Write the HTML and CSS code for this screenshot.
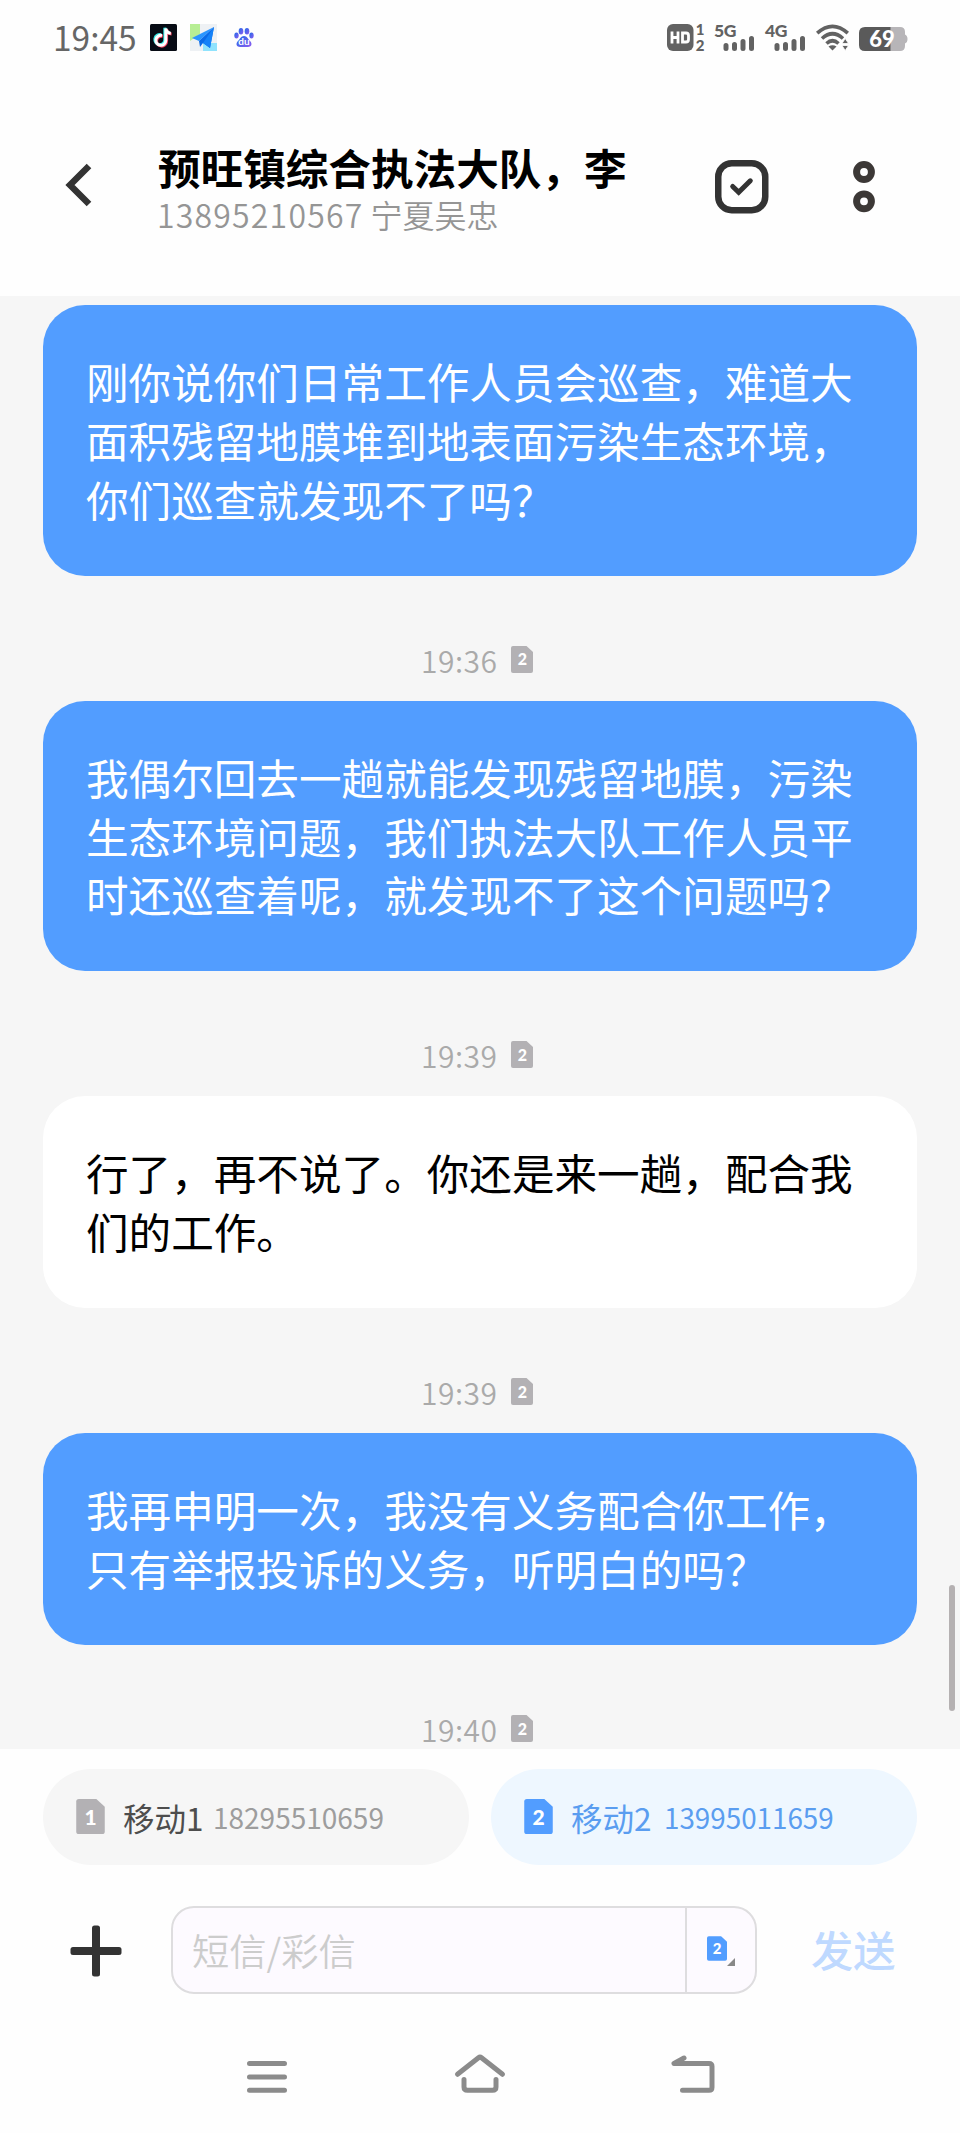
FILE: index.html
```html
<!DOCTYPE html>
<html lang="zh-CN">
<head>
<meta charset="utf-8">
<title>短信</title>
<link rel="stylesheet" href="styles.css">
</head>
<body>
<svg class="defs" width="0" height="0">
  <symbol id="sim" viewBox="0 0 22 27"><path d="M2 0H15.500L22 6V25a2 2 0 0 1-2 2H2a2 2 0 0 1-2-2V2a2 2 0 0 1 2-2Z" fill="currentColor"/></symbol>
  <symbol id="bars" viewBox="0 0 32 15"><path d="M3 9.500V12.500M11.500 8.500V12.500M20 5.500V12.500M28.500 2.500V12.500" stroke="#626262" stroke-width="5" stroke-linecap="round"/></symbol>
</svg>
<div class="phone">
  <div class="status">
    <span class="clock">19:45</span>
    <svg class="app-a" width="27" height="27" viewBox="0 0 27 27"><rect width="27" height="27" rx="1.500" fill="#070b14"/><g fill="none" stroke-width="3"><path d="M12 11.500a5 5 0 1 0 3.800 5V4.500c.5 3 2.500 4.500 5 4.700" stroke="#35e5e2" transform="translate(-1 -.8)"/><path d="M12 11.500a5 5 0 1 0 3.800 5V4.500c.5 3 2.500 4.500 5 4.700" stroke="#f3425e" transform="translate(.8 .8)"/><path d="M12 11.500a5 5 0 1 0 3.800 5V4.500c.5 3 2.500 4.500 5 4.700" stroke="#fff"/></g></svg>
    <svg class="app-b" width="27" height="27" viewBox="0 0 27 27"><rect width="27" height="27" fill="#eef1f4"/><path d="M0 0H10V10L0 17Z" fill="#b7ee94"/><path d="M13 19H27V27H13Z" fill="#90e3fd"/><path d="M24 3 2 14l7 3Z" fill="#2a95ff"/><path d="M24 3 9 17l1 6 3-4 7 5Z" fill="#0a6be8"/><path d="M24 3 13 19l7 5Z" fill="#1482f8"/></svg>
    <svg class="app-c" width="20" height="20" viewBox="0 0 20 20"><defs><linearGradient id="paw" x2="1" y2="1"><stop stop-color="#1e6be8"/><stop offset="1" stop-color="#8d5cf0"/></linearGradient></defs><g fill="url(#paw)"><ellipse cx="2.500" cy="7.500" rx="2.200" ry="3"/><ellipse cx="7" cy="3.200" rx="2.300" ry="3.200"/><ellipse cx="13" cy="3.200" rx="2.300" ry="3.200"/><ellipse cx="17.500" cy="7.500" rx="2.200" ry="3"/><path d="M10 8c3 0 4 3 6 5 3 3 1 6-2 6H6c-3 0-5-3-2-6 2-2 3-5 6-5Z"/></g><text x="10" y="17" class="du">du</text></svg>
    <svg class="hd" width="38" height="27" viewBox="0 0 38 27"><rect width="26.500" height="27" rx="6" fill="#626262"/><path d="M5 7.500V19.500M11 7.500V19.500M5 13.500H11M15.500 9H19Q21.500 9 21.500 11.500V15.500Q21.500 18 19 18H15.500Z" fill="none" stroke="#fff" stroke-width="2.800"/><text x="33" y="10.500" class="tiny">1</text><text x="33" y="26.500" class="tiny">2</text></svg>
    <svg class="net" width="42" height="27" viewBox="0 0 42 27"><text x="0" y="13" class="gen">5G</text><use href="#bars" x="9" y="12" width="32" height="15"/></svg>
    <svg class="net" width="42" height="27" viewBox="0 0 42 27"><text x="0" y="13" class="gen">4G</text><use href="#bars" x="9" y="12" width="32" height="15"/></svg>
    <svg class="wifi" width="33" height="27" viewBox="0 0 33 27"><g fill="none" stroke="#626262" stroke-width="3.600"><path d="M1.200 9.200Q16.500-4.500 31.800 9.200"/><path d="M6 14.500Q16.500 5 27 14.500"/><path d="M10.500 19.500Q16.500 14 22.500 19.500"/></g><path d="M12.500 22.500Q16.500 19.800 20.500 22.500L16.500 26.500Z" fill="#626262"/><path d="M26 19.500 29.200 14.500 32.500 19.500ZM26 21.500H32.500L29.200 26.500Z" fill="#626262" stroke="#fff" stroke-width=".8"/></svg>
    <svg class="battery" width="49" height="24" viewBox="0 0 49 24"><path d="M31 0H41q5 0 5 5v2.500q2.500 1 2.500 4.500T46 16.500V19q0 5-5 5H31Z" fill="#b7b5b8"/><path d="M6 0H31.500V24H6q-6 0-6-6V6q0-6 6-6Z" fill="#5a5a5a"/><text x="23" y="19.500" class="level">69</text></svg>
  </div>

  <header class="header">
    <svg class="back" width="28" height="46" viewBox="0 0 28 46"><path d="M24 4 5 23 24 42" fill="none" stroke="#333" stroke-width="6.500"/></svg>
    <div class="contact">
      <div class="name">预旺镇综合执法大队，李</div>
      <div class="place"><span class="digits">13895210567</span> 宁夏吴忠</div>
    </div>
    <svg class="select" width="54" height="54" viewBox="0 0 54 54"><rect x="3.250" y="3.250" width="47" height="47" rx="13.500" fill="none" stroke="#333" stroke-width="6.500"/><path d="M17.700 26.500 23.700 32.300 35.300 20.800" fill="none" stroke="#333" stroke-width="5" stroke-linecap="round"/></svg>
    <svg class="more" width="22" height="52" viewBox="0 0 22 52"><g fill="none" stroke="#3c3836" stroke-width="7"><circle cx="11" cy="11" r="7.400"/><circle cx="11" cy="40.300" r="7.400"/></g></svg>
  </header>

  <main class="chat">
    <div class="bubble sent">刚你说你们日常工作人员会巡查，难道大<br>面积残留地膜堆到地表面污染生态环境，<br>你们巡查就发现不了吗？</div>
    <div class="stamp">19:36<span class="sim"><svg width="22" height="27"><use href="#sim"/></svg><b>2</b></span></div>
    <div class="bubble sent">我偶尔回去一趟就能发现残留地膜，污染<br>生态环境问题，我们执法大队工作人员平<br>时还巡查着呢，就发现不了这个问题吗？</div>
    <div class="stamp">19:39<span class="sim"><svg width="22" height="27"><use href="#sim"/></svg><b>2</b></span></div>
    <div class="bubble received">行了，再不说了。你还是来一趟，配合我<br>们的工作。</div>
    <div class="stamp">19:39<span class="sim"><svg width="22" height="27"><use href="#sim"/></svg><b>2</b></span></div>
    <div class="bubble sent">我再申明一次，我没有义务配合你工作，<br>只有举报投诉的义务，听明白的吗？</div>
    <div class="stamp">19:40<span class="sim"><svg width="22" height="27"><use href="#sim"/></svg><b>2</b></span></div>
    <div class="scrollbar"></div>
  </main>

  <div class="cards">
    <div class="card"><span class="sim large"><svg width="29" height="35"><use href="#sim"/></svg><b>1</b></span><span class="carrier">移动1</span><span class="number">18295510659</span></div>
    <div class="card active"><span class="sim large"><svg width="29" height="35"><use href="#sim"/></svg><b>2</b></span><span class="carrier">移动2</span><span class="number">13995011659</span></div>
  </div>

  <div class="composer">
    <svg class="plus" width="52" height="52" viewBox="0 0 52 52" fill="#333"><rect x="22" y="0.500" width="8" height="51" rx="2.500"/><rect x="0.500" y="22" width="51" height="8" rx="2.500"/></svg>
    <div class="field">
      <div class="placeholder">短信/彩信</div>
      <div class="picker"><span class="sim small"><svg width="20" height="25"><use href="#sim"/></svg><b>2</b></span><svg class="corner" width="8" height="8"><path d="M8 0V8H0Z" fill="#888"/></svg></div>
    </div>
    <div class="send">发送</div>
  </div>

  <nav class="nav">
    <svg width="54" height="44" viewBox="0 0 54 44"><path d="M9.500 13.500H44.500M9.500 27H44.500M9.500 40.300H44.500" class="line"/></svg>
    <svg width="54" height="44" viewBox="0 0 54 44"><path d="M4.500 24.300 25.500 7.800Q27 6.600 28.500 7.800L49.500 24.300M11 29.500V37Q11 40.300 14.500 40.300H39.500Q43 40.300 43 37V29.500" class="line"/></svg>
    <svg width="54" height="44" viewBox="0 0 54 44"><path d="M18 8 8 13.500H43Q46 13.500 46 16.500V37.300Q46 40.300 43 40.300H16.500" class="line"/></svg>
  </nav>
</div>
</body>
</html>
```

FILE: styles.css
```css
* { box-sizing: border-box; }
body { margin: 0; background: #fefefe; }
svg { display: block; flex: none; overflow: visible; }
.defs { position: absolute; }
.phone {
  width: 960px;
  height: 2133px;
  display: flex;
  flex-direction: column;
  background: #fefefe;
  font-family: "Noto Sans CJK SC", sans-serif;
  overflow: hidden;
}

/* status bar */
.status { height: 75px; padding-left: 53px; display: flex; align-items: center; flex: none; }
.clock { width: 97px; padding-bottom: 2px; font-size: 33.500px; line-height: 40px; color: #666; font-weight: 400; }
.app-b { margin-left: 13px; }
.app-c { margin-left: 17px; }
.hd { margin-left: 413px; }
.net { margin-left: 9px; }
.wifi { margin-left: 9px; }
.battery { margin: 2px 0 0 10px; }
.du { font: 700 10px Lato, sans-serif; fill: #fff; text-anchor: middle; }
.tiny { font: 900 15px Lato, sans-serif; fill: #626262; text-anchor: middle; }
.gen { font: 900 17.500px Lato, sans-serif; fill: #626262; letter-spacing: -.5px; }
.level { font: 900 22px Lato, sans-serif; fill: #fff; text-anchor: middle; }

/* header */
.header { height: 221px; padding: 63px 85px 0 64px; display: flex; align-items: flex-start; flex: none; }
.back { margin: 24px 0 0 1px; }
.contact { margin-left: 65px; width: 557px; white-space: nowrap; }
.name { font-size: 42.600px; line-height: 58px; font-weight: 700; color: #000; }
.place { margin-left: -1px; font-size: 32px; line-height: 37px; color: #959595; font-weight: 350; }
.digits { letter-spacing: 1.200px; }
.select { margin-top: 22px; }
.more { margin: 23px 0 0 84px; }

/* conversation */
.chat { height: 1453px; padding: 9px 43px 0; background: #f6f6f6; position: relative; overflow: hidden; flex: none; }
.bubble { padding: 47.300px 43px; border-radius: 42px; font-size: 42.600px; line-height: 58.700px; white-space: nowrap; }
.sent { background: #529dff; color: #fff; }
.received { background: #fff; color: #000; }
.stamp { height: 124.900px; padding: 65px 0 22px 378px; display: flex; align-items: center; gap: 14px; font-size: 30px; line-height: 38px; letter-spacing: .5px; color: #aaa; font-weight: 350; }
.stamp .sim { margin-bottom: 1px; }
.scrollbar { position: absolute; left: 949px; top: 1289px; width: 6px; height: 126px; border-radius: 3px; background: #b5b1b2; }

/* SIM badge */
.sim { display: grid; place-items: center; color: #b3b1b4; letter-spacing: 0; flex: none; }
.sim > * { grid-area: 1 / 1; }
.sim b { color: #fff; font: 900 16px/1 Lato, sans-serif; }
.sim.large b { font-size: 21px; }
.sim.small b { font-size: 15px; }

/* SIM selection */
.cards { padding: 20px 43px 0; display: flex; gap: 22px; flex: none; }
.card { flex: 1; height: 96px; border-radius: 48px; padding: 0 0 1px 33px; display: flex; align-items: center; background: #f6f6f6; white-space: nowrap; }
.carrier { margin-left: 18px; width: 82px; font-size: 31.500px; color: #4d4d4d; }
.number { margin-left: 8px; font-size: 28px; color: #9d9d9d; font-weight: 400; }
.active { background: #eef7ff; }
.active .carrier { width: 85px; }
.active .sim { color: #529dff; }
.active .carrier, .active .number { color: #5a9df0; }
.active .number { font-size: 27.800px; }

/* message composer */
.composer { height: 129px; padding: 41px 0 0 70px; display: flex; align-items: flex-start; flex: none; }
.plus { margin-top: 19px; }
.field { width: 586px; height: 88px; margin-left: 49px; border: 2px solid #dedddf; border-radius: 23px; background: #fdfaff; display: flex; }
.placeholder { flex: 1; padding-left: 19px; font-size: 37.300px; line-height: 85px; color: #ccc; font-weight: 350; }
.picker { width: 70px; border-left: 2px solid #dedddf; padding: 28px 0 0 20px; display: flex; align-items: flex-start; }
.picker .sim { color: #529dff; }
.corner { margin-top: 22px; }
.send { margin-left: 54px; font-size: 42.300px; line-height: 86px; color: #bfd9ff; font-weight: 500; }

/* system navigation */
.nav { padding: 56px 240px 0; display: flex; justify-content: space-between; flex: none; }
.line { fill: none; stroke: #8b8b8b; stroke-width: 5; stroke-linecap: round; stroke-linejoin: round; }
```
